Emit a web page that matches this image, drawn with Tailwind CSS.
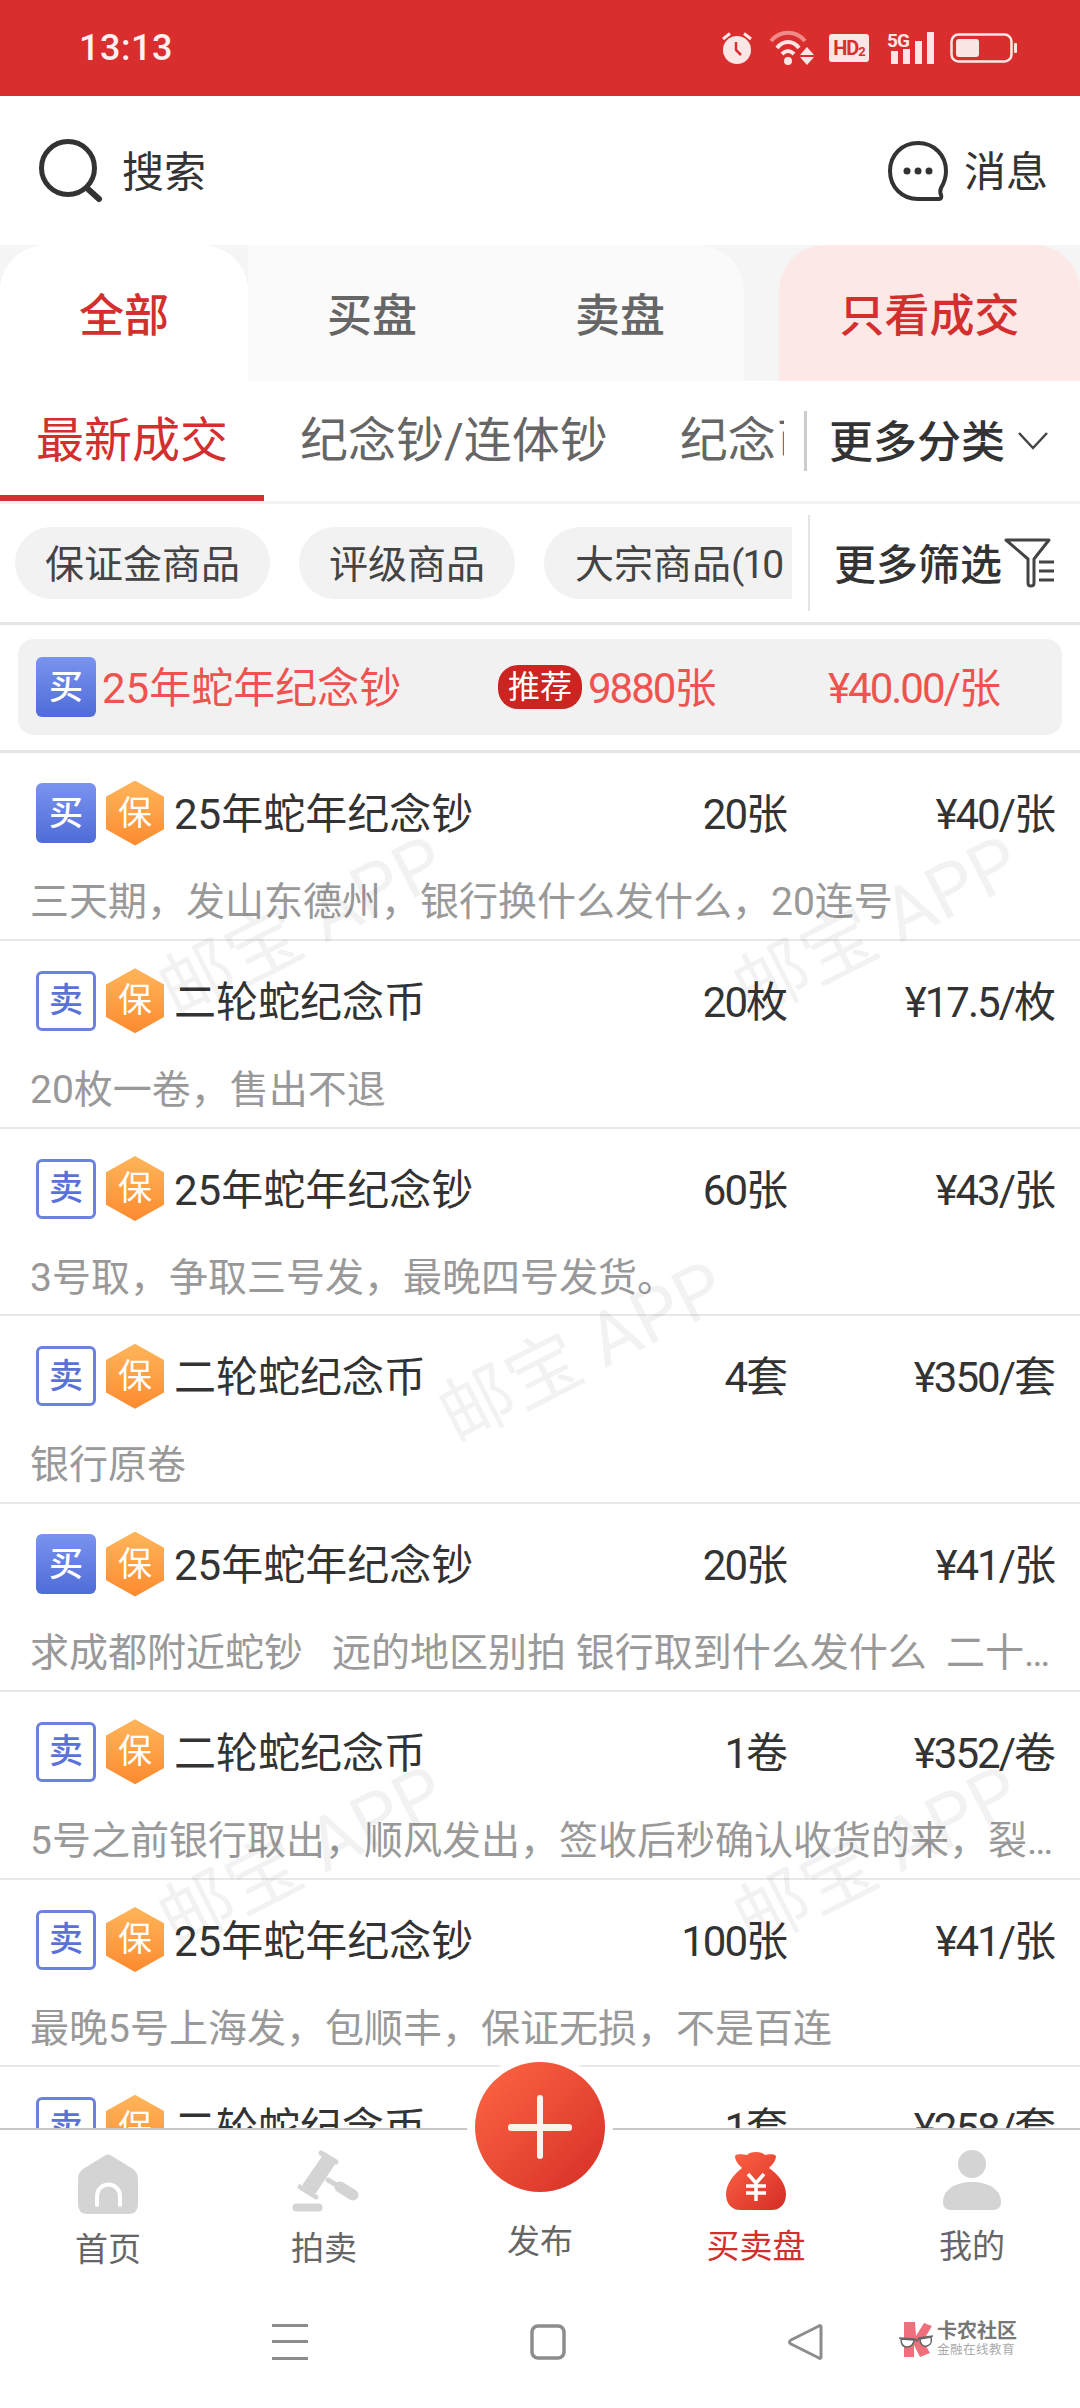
<!DOCTYPE html>
<html lang="zh-CN">
  <head>
    <meta charset="UTF-8" />
    <meta name="viewport" content="width=device-width, initial-scale=1.0" />
    <title>买卖盘</title>
    <script src="https://cdn.jsdelivr.net/npm/@tailwindcss/browser@4"></script>
  </head>

  <body class="bg-white font-[family-name:Roboto,'Noto_Sans_CJK_SC',sans-serif] text-[#333]">
    <div class="relative flex flex-col w-[1080px] h-[2408px] overflow-hidden bg-white">
      <!-- Status bar -->
      <div class="flex items-center h-[96px] shrink-0 bg-[#d92e2d] pl-[79px] pr-[62px] text-[#fbe6e6]">
        <span class="text-[36px] font-medium tracking-[0.5px] text-[#fdf0f0]">13:13</span>
        <div class="flex items-center ml-auto">
          <svg width="32" height="34" viewBox="0 0 32 34" fill="#fbe6e6">
            <circle cx="16" cy="19" r="14" />
            <path d="M2 8 9 2.5M30 8 23 2.5" stroke="#fbe6e6" stroke-width="3" />
            <path d="M15 11v8l5 5" fill="none" stroke="#d92e2d" stroke-width="2.5" />
          </svg>
          <svg class="ml-[16px]" width="46" height="36" viewBox="0 0 46 36" fill="none">
            <path d="M2 11C11 0 27 0 36 11" stroke="#f08a86" stroke-width="4" />
            <path d="M8 18C14 10 24 10 30 18" stroke="#fbe6e6" stroke-width="4" />
            <path d="M13 24C17 20 21 20 25 24" stroke="#fbe6e6" stroke-width="4" />
            <circle cx="19" cy="31" r="4" fill="#fbe6e6" />
            <path d="M38 18l7 8H31zM31 28h14l-7 8z" fill="#fbe6e6" transform="translate(0 -1)" />
          </svg>
          <span class="flex items-center justify-center ml-[14px] w-[40px] h-[28px] rounded-[3px] bg-[#fbe6e6] text-[#d92e2d] text-[20px] font-bold leading-none tracking-[-1px]">HD<span class="text-[13px] mt-[6px]">2</span></span>
          <div class="relative ml-[18px] w-[48px] h-[32px]">
            <svg class="absolute left-0 top-0" width="48" height="32" viewBox="0 0 48 32" fill="#fbe6e6">
              <rect x="4" y="19" width="7" height="13" />
              <rect x="16" y="17" width="7" height="15" />
              <rect x="28" y="9" width="7" height="23" />
              <rect x="40" y="0" width="7" height="32" />
            </svg>
            <span class="absolute left-0 top-[-1px] text-[19px] font-bold leading-none tracking-[-1px]">5G</span>
          </div>
          <svg class="ml-[15px]" width="68" height="30" viewBox="0 0 68 30" fill="none">
            <rect x="1.5" y="1.5" width="60" height="27" rx="7" stroke="#fbe6e6" stroke-width="2.5" />
            <rect x="6" y="6" width="23" height="18" rx="3" fill="#fbe6e6" />
            <rect x="64" y="10" width="3" height="10" rx="1" fill="#fbe6e6" />
          </svg>
        </div>
      </div>

      <!-- Search + messages -->
      <div class="flex items-center justify-between h-[149px] shrink-0 pl-[38px] pr-[32px]">
        <div class="flex items-center">
          <svg width="66" height="64" viewBox="0 0 66 64" fill="none">
            <circle cx="30" cy="29" r="26.5" stroke="#333" stroke-width="5" />
            <path d="M50 50 61 60" stroke="#333" stroke-width="6" stroke-linecap="round" />
          </svg>
          <span class="ml-[18px] pt-[4px] text-[42px] leading-none">搜索</span>
        </div>
        <div class="flex items-center">
          <svg class="-ml-[3px]" width="62" height="62" viewBox="0 0 62 62" fill="none">
            <path d="M31 3C15 3 3 15 3 31s12 28 28 28c4 0 11 0 21 0 2 0 3-2 2-4-1-2-1-4 0-7 3-5 5-10 5-17C59 15 47 3 31 3Z" stroke="#333" stroke-width="4" />
            <circle cx="20" cy="31" r="3.5" fill="#333" />
            <circle cx="31" cy="31" r="3.5" fill="#333" />
            <circle cx="42" cy="31" r="3.5" fill="#333" />
          </svg>
          <span class="ml-[15px] pt-[4px] text-[42px] leading-none">消息</span>
        </div>
      </div>

      <!-- Trade type tabs -->
      <div class="flex h-[136px] shrink-0 bg-[#f5f5f5] text-[45px] font-medium">
        <div class="flex items-center justify-center w-[248px] pt-[8px] rounded-t-[46px] bg-white text-[#d32f2f]">全部</div>
        <div class="flex w-[496px] rounded-tr-[46px] bg-[#fafafa] text-[#666]">
          <div class="flex items-center justify-center w-[248px] pt-[8px]">买盘</div>
          <div class="flex items-center justify-center w-[248px] pt-[8px]">卖盘</div>
        </div>
        <div class="flex items-center justify-center ml-[35px] flex-1 pt-[8px] rounded-t-[46px] bg-[#fde8e8] text-[#d32f2f]">只看成交</div>
      </div>

      <!-- Categories -->
      <div class="flex items-center h-[123px] shrink-0 border-b-[3px] border-[#f2f2f2]">
        <div class="flex h-full w-[784px] overflow-hidden whitespace-nowrap text-[48px] text-[#666]">
          <div class="flex items-center shrink-0 px-[36px] border-y-[6px] border-t-transparent border-b-[#d32f2f] text-[#d32f2f]">最新成交</div>
          <div class="flex items-center shrink-0 px-[36px]">纪念钞/连体钞</div>
          <div class="flex items-center shrink-0 px-[36px]">纪念币</div>
        </div>
        <div class="ml-[20px] w-[3px] h-[60px] bg-[#ccc]"></div>
        <span class="ml-[22px] pt-[4px] text-[44px] font-medium whitespace-nowrap">更多分类</span>
        <svg class="ml-[12px]" width="32" height="20" viewBox="0 0 32 20" fill="none">
          <path d="M2 2 16 17 30 2" stroke="#444" stroke-width="2.5" />
        </svg>
      </div>

      <!-- Filters -->
      <div class="flex items-center h-[121px] shrink-0 border-b-[3px] border-[#e5e5e5]">
        <div class="flex gap-[29px] w-[792px] shrink-0 pl-[15px] overflow-hidden whitespace-nowrap text-[39px] text-[#444]">
          <span class="flex items-center h-[72px] px-[30px] pt-[4px] rounded-full bg-[#f2f2f2]">保证金商品</span>
          <span class="flex items-center h-[72px] px-[30px] pt-[4px] rounded-full bg-[#f2f2f2]">评级商品</span>
          <span class="flex items-center h-[72px] pl-[31px] pr-[30px] pt-[4px] rounded-full bg-[#f2f2f2] whitespace-pre">大宗商品<span class="tracking-[-2px]">(10</span>  0+)</span>
        </div>
        <div class="ml-[16px] w-[2px] h-[96px] bg-[#e5e5e5]"></div>
        <span class="ml-[24px] pt-[4px] text-[42px] font-medium whitespace-nowrap">更多筛选</span>
        <svg class="ml-[2px]" width="52" height="52" viewBox="0 0 52 52" fill="none">
          <path d="M2 3H45L30 22V46c0 4-6 4-6 0V22Z" stroke="#444" stroke-width="3" stroke-linejoin="round" />
          <path d="M35 25H50M35 34H50M35 43H50" stroke="#444" stroke-width="3" />
        </svg>
      </div>

      <!-- Pinned order -->
      <div class="h-[128px] shrink-0 pt-[14px] border-b-[3px] border-[#e5e5e5]">
        <div class="flex items-center h-[96px] mx-[18px] pl-[18px] rounded-[16px] bg-[#f1f1f1] text-[42px] text-[#ef5350] whitespace-nowrap">
          <span class="flex items-center justify-center w-[60px] h-[60px] rounded-[6px] bg-linear-to-b from-[#7b93ef] to-[#4f6cd8] text-[34px] font-medium text-white">买</span>
          <span class="ml-[6px] w-[396px] pt-[3px]">25年蛇年纪念钞</span>
          <span class="flex items-center justify-center w-[84px] h-[44px] rounded-[20px] bg-[#cc2420] text-[32px] text-white">推荐</span>
          <span class="ml-[6px] w-[240px] pt-[3px] tracking-[-2px]">9880张</span>
          <span class="pt-[3px] tracking-[-2px]">¥40.00/张</span>
        </div>
      </div>

      <!-- Order list -->
      <div class="relative flex-1 overflow-hidden">
        <div class="h-[187.75px] border-b-[2px] border-[#e8e8e8] pt-[30px] pl-[30px] pr-[26px]">
          <div class="flex items-center h-[60px] pl-[6px] text-[42px] whitespace-nowrap">
            <span class="flex items-center justify-center shrink-0 w-[60px] h-[60px] rounded-[6px] bg-linear-to-b from-[#7b93ef] to-[#4f6cd8] text-[34px] font-medium text-white">买</span>
            <span class="flex items-center justify-center shrink-0 ml-[10px] w-[58px] h-[65px] bg-linear-to-b from-[#ffb55a] to-[#fc8a2e] [clip-path:polygon(50%_0,100%_25%,100%_75%,50%_100%,0_75%,0_25%)] text-[34px] text-white">保</span>
            <span class="ml-[10px] flex-1 pt-[3px]">25年蛇年纪念钞</span>
            <span class="pt-[3px] text-right tracking-[-2px]">20张</span>
            <span class="w-[268px] pt-[3px] text-right tracking-[-2px]">¥40/张</span>
          </div>
          <p class="mt-[29px] truncate text-[39px] leading-[60px] text-[#999]">三天期，发山东德州，银行换什么发什么，20连号</p>
        </div>
        <div class="h-[187.75px] border-b-[2px] border-[#e8e8e8] pt-[30px] pl-[30px] pr-[26px]">
          <div class="flex items-center h-[60px] pl-[6px] text-[42px] whitespace-nowrap">
            <span class="flex items-center justify-center shrink-0 w-[60px] h-[60px] rounded-[6px] border-[3px] border-[#6b82df] text-[34px] font-medium text-[#5a72d8]">卖</span>
            <span class="flex items-center justify-center shrink-0 ml-[10px] w-[58px] h-[65px] bg-linear-to-b from-[#ffb55a] to-[#fc8a2e] [clip-path:polygon(50%_0,100%_25%,100%_75%,50%_100%,0_75%,0_25%)] text-[34px] text-white">保</span>
            <span class="ml-[10px] flex-1 pt-[3px]">二轮蛇纪念币</span>
            <span class="pt-[3px] text-right tracking-[-2px]">20枚</span>
            <span class="w-[268px] pt-[3px] text-right tracking-[-2px]">¥17.5/枚</span>
          </div>
          <p class="mt-[29px] truncate text-[39px] leading-[60px] text-[#999]">20枚一卷，售出不退</p>
        </div>
        <div class="h-[187.75px] border-b-[2px] border-[#e8e8e8] pt-[30px] pl-[30px] pr-[26px]">
          <div class="flex items-center h-[60px] pl-[6px] text-[42px] whitespace-nowrap">
            <span class="flex items-center justify-center shrink-0 w-[60px] h-[60px] rounded-[6px] border-[3px] border-[#6b82df] text-[34px] font-medium text-[#5a72d8]">卖</span>
            <span class="flex items-center justify-center shrink-0 ml-[10px] w-[58px] h-[65px] bg-linear-to-b from-[#ffb55a] to-[#fc8a2e] [clip-path:polygon(50%_0,100%_25%,100%_75%,50%_100%,0_75%,0_25%)] text-[34px] text-white">保</span>
            <span class="ml-[10px] flex-1 pt-[3px]">25年蛇年纪念钞</span>
            <span class="pt-[3px] text-right tracking-[-2px]">60张</span>
            <span class="w-[268px] pt-[3px] text-right tracking-[-2px]">¥43/张</span>
          </div>
          <p class="mt-[29px] truncate text-[39px] leading-[60px] text-[#999]">3号取，争取三号发，最晚四号发货。</p>
        </div>
        <div class="h-[187.75px] border-b-[2px] border-[#e8e8e8] pt-[30px] pl-[30px] pr-[26px]">
          <div class="flex items-center h-[60px] pl-[6px] text-[42px] whitespace-nowrap">
            <span class="flex items-center justify-center shrink-0 w-[60px] h-[60px] rounded-[6px] border-[3px] border-[#6b82df] text-[34px] font-medium text-[#5a72d8]">卖</span>
            <span class="flex items-center justify-center shrink-0 ml-[10px] w-[58px] h-[65px] bg-linear-to-b from-[#ffb55a] to-[#fc8a2e] [clip-path:polygon(50%_0,100%_25%,100%_75%,50%_100%,0_75%,0_25%)] text-[34px] text-white">保</span>
            <span class="ml-[10px] flex-1 pt-[3px]">二轮蛇纪念币</span>
            <span class="pt-[3px] text-right tracking-[-2px]">4套</span>
            <span class="w-[268px] pt-[3px] text-right tracking-[-2px]">¥350/套</span>
          </div>
          <p class="mt-[29px] truncate text-[39px] leading-[60px] text-[#999]">银行原卷</p>
        </div>
        <div class="h-[187.75px] border-b-[2px] border-[#e8e8e8] pt-[30px] pl-[30px] pr-[26px]">
          <div class="flex items-center h-[60px] pl-[6px] text-[42px] whitespace-nowrap">
            <span class="flex items-center justify-center shrink-0 w-[60px] h-[60px] rounded-[6px] bg-linear-to-b from-[#7b93ef] to-[#4f6cd8] text-[34px] font-medium text-white">买</span>
            <span class="flex items-center justify-center shrink-0 ml-[10px] w-[58px] h-[65px] bg-linear-to-b from-[#ffb55a] to-[#fc8a2e] [clip-path:polygon(50%_0,100%_25%,100%_75%,50%_100%,0_75%,0_25%)] text-[34px] text-white">保</span>
            <span class="ml-[10px] flex-1 pt-[3px]">25年蛇年纪念钞</span>
            <span class="pt-[3px] text-right tracking-[-2px]">20张</span>
            <span class="w-[268px] pt-[3px] text-right tracking-[-2px]">¥41/张</span>
          </div>
          <p class="mt-[29px] truncate whitespace-pre text-[39px] leading-[60px] text-[#999]">求成都附近蛇钞   远的地区别拍 银行取到什么发什么  二十连号</p>
        </div>
        <div class="h-[187.75px] border-b-[2px] border-[#e8e8e8] pt-[30px] pl-[30px] pr-[26px]">
          <div class="flex items-center h-[60px] pl-[6px] text-[42px] whitespace-nowrap">
            <span class="flex items-center justify-center shrink-0 w-[60px] h-[60px] rounded-[6px] border-[3px] border-[#6b82df] text-[34px] font-medium text-[#5a72d8]">卖</span>
            <span class="flex items-center justify-center shrink-0 ml-[10px] w-[58px] h-[65px] bg-linear-to-b from-[#ffb55a] to-[#fc8a2e] [clip-path:polygon(50%_0,100%_25%,100%_75%,50%_100%,0_75%,0_25%)] text-[34px] text-white">保</span>
            <span class="ml-[10px] flex-1 pt-[3px]">二轮蛇纪念币</span>
            <span class="pt-[3px] text-right tracking-[-2px]">1卷</span>
            <span class="w-[268px] pt-[3px] text-right tracking-[-2px]">¥352/卷</span>
          </div>
          <p class="mt-[29px] truncate text-[39px] leading-[60px] text-[#999]">5号之前银行取出，顺风发出，签收后秒确认收货的来，裂开不退</p>
        </div>
        <div class="h-[187.75px] border-b-[2px] border-[#e8e8e8] pt-[30px] pl-[30px] pr-[26px]">
          <div class="flex items-center h-[60px] pl-[6px] text-[42px] whitespace-nowrap">
            <span class="flex items-center justify-center shrink-0 w-[60px] h-[60px] rounded-[6px] border-[3px] border-[#6b82df] text-[34px] font-medium text-[#5a72d8]">卖</span>
            <span class="flex items-center justify-center shrink-0 ml-[10px] w-[58px] h-[65px] bg-linear-to-b from-[#ffb55a] to-[#fc8a2e] [clip-path:polygon(50%_0,100%_25%,100%_75%,50%_100%,0_75%,0_25%)] text-[34px] text-white">保</span>
            <span class="ml-[10px] flex-1 pt-[3px]">25年蛇年纪念钞</span>
            <span class="pt-[3px] text-right tracking-[-2px]">100张</span>
            <span class="w-[268px] pt-[3px] text-right tracking-[-2px]">¥41/张</span>
          </div>
          <p class="mt-[29px] truncate text-[39px] leading-[60px] text-[#999]">最晚5号上海发，包顺丰，保证无损，不是百连</p>
        </div>
        <div class="h-[187.75px] pt-[30px] pl-[30px] pr-[26px]">
          <div class="flex items-center h-[60px] pl-[6px] text-[42px] whitespace-nowrap">
            <span class="flex items-center justify-center shrink-0 w-[60px] h-[60px] rounded-[6px] border-[3px] border-[#6b82df] text-[34px] font-medium text-[#5a72d8]">卖</span>
            <span class="flex items-center justify-center shrink-0 ml-[10px] w-[58px] h-[65px] bg-linear-to-b from-[#ffb55a] to-[#fc8a2e] [clip-path:polygon(50%_0,100%_25%,100%_75%,50%_100%,0_75%,0_25%)] text-[34px] text-white">保</span>
            <span class="ml-[10px] flex-1 pt-[3px]">二轮蛇纪念币</span>
            <span class="pt-[3px] text-right tracking-[-2px]">1套</span>
            <span class="w-[268px] pt-[3px] text-right tracking-[-2px]">¥258/套</span>
          </div>
        </div>

        <!-- Watermarks -->
        <span class="absolute left-[148px] top-[118px] -rotate-[27deg] whitespace-nowrap text-[74px] text-black/5 pointer-events-none">邮宝 APP</span>
        <span class="absolute left-[723px] top-[118px] -rotate-[27deg] whitespace-nowrap text-[74px] text-black/5 pointer-events-none">邮宝 APP</span>
        <span class="absolute left-[428px] top-[543px] -rotate-[27deg] whitespace-nowrap text-[74px] text-black/5 pointer-events-none">邮宝 APP</span>
        <span class="absolute left-[148px] top-[1048px] -rotate-[27deg] whitespace-nowrap text-[74px] text-black/5 pointer-events-none">邮宝 APP</span>
        <span class="absolute left-[723px] top-[1048px] -rotate-[27deg] whitespace-nowrap text-[74px] text-black/5 pointer-events-none">邮宝 APP</span>
      </div>

      <!-- Bottom navigation -->
      <div class="relative shrink-0 bg-white border-t-[2px] border-[#c8c8c8]">
        <div class="grid grid-cols-5 h-[170px] text-[33px] text-[#666] leading-[40px]">
          <div class="flex flex-col items-center pt-[24px]">
            <svg width="60" height="60" viewBox="0 0 60 60">
              <path d="M26 2Q30 -1 34 2L55 15Q60 19 60 25V50Q60 60 50 60H10Q0 60 0 50V25Q0 19 5 15Z" fill="#d4d4d4" />
              <path d="M19 51V42a11.5 11.5 0 0 1 23 0V51" fill="none" stroke="#fff" stroke-width="4" stroke-linecap="round" />
            </svg>
            <span class="mt-[16px]">首页</span>
          </div>
          <div class="flex flex-col items-center pt-[20px]">
            <svg width="72" height="62" viewBox="0 0 72 62" fill="#d4d4d4" stroke="#d4d4d4" stroke-linecap="round">
              <path d="M36 6 46 13 27 42 16 35Z" stroke-width="3" stroke-linejoin="round" />
              <path d="M33 3 48 12M12 37 28 47" stroke-width="5" />
              <path d="M40 30 52 37" stroke-width="5" />
              <path d="M52 37 65 45" stroke-width="11" />
              <rect x="5" y="54" width="29" height="7" rx="3" stroke-width="1" />
            </svg>
            <span class="mt-[17px]">拍卖</span>
          </div>
          <div class="flex flex-col items-center pt-[92px]">
            <span>发布</span>
          </div>
          <div class="flex flex-col items-center pt-[20px]">
            <svg width="60" height="60" viewBox="0 0 60 60">
              <defs>
                <linearGradient id="bag" x1="0" y1="0" x2="1" y2="1">
                  <stop offset="0" stop-color="#ff6644" />
                  <stop offset="1" stop-color="#d42c26" />
                </linearGradient>
              </defs>
              <path d="M9 6C12 3 18 5 21 5 24 1 36 1 39 5 42 5 46 3 50 6 50 11 46 15 43 18 52 24 60 34 60 44 60 54 54 60 46 60H14C6 60 0 54 0 44 0 34 8 24 16 18 13 15 9 11 9 6Z" fill="url(#bag)" />
              <path d="M22 24 30 33 38 24M20 36H40M20 43H40M30 33V51" fill="none" stroke="#fff" stroke-width="3.5" />
            </svg>
            <span class="mt-[17px] text-[#d32f2f]">买卖盘</span>
          </div>
          <div class="flex flex-col items-center pt-[20px]">
            <svg width="58" height="60" viewBox="0 0 58 60" fill="#d4d4d4">
              <ellipse cx="29" cy="14" rx="14" ry="14" />
              <path d="M0 52C0 40 12 32 29 32s29 8 29 20c0 5-3 8-8 8H8c-5 0-8-3-8-8Z" />
            </svg>
            <span class="mt-[17px]">我的</span>
          </div>
        </div>

        <!-- System navigation -->
        <div class="flex items-start h-[108px] pl-[272px] pt-[24px]">
          <svg width="36" height="36" viewBox="0 0 36 36" fill="#8c8c8c">
            <rect y="0" width="36" height="3" />
            <rect y="16" width="36" height="3" />
            <rect y="33" width="36" height="3" />
          </svg>
          <svg class="ml-[222px]" width="36" height="36" viewBox="0 0 36 36" fill="none">
            <rect x="2" y="2" width="32" height="32" rx="6" stroke="#8c8c8c" stroke-width="3.5" />
          </svg>
          <svg class="ml-[222px]" width="36" height="36" viewBox="0 0 36 36" fill="none">
            <path d="M33 3v30c0 1-1 2-2 1L3 20c-2-1-2-3 0-4L31 2c1-1 2 0 2 1Z" stroke="#8c8c8c" stroke-width="3" stroke-linejoin="round" />
          </svg>
          <div class="flex ml-[75px] -mt-[3px]">
            <svg width="36" height="36" viewBox="0 0 36 36">
              <path d="M5 1H16L17 15 25 2 33 5 24 20 31 32 21 36 15 24 15 36H5Z" fill="#ef6f7d" />
              <path d="M0 17 16 18 18 20 20 17 34 15" fill="none" stroke="#666" stroke-width="1.5" />
              <path d="M2 18c0 5 2 8 6 8s7-3 7-7ZM21 18c0 5 3 8 7 7s5-5 4-9Z" fill="#fff" stroke="#666" stroke-width="1.5" />
            </svg>
            <div class="ml-[2px] flex flex-col whitespace-nowrap">
              <span class="text-[20px] leading-[21px] font-bold text-[#777]">卡农社区</span>
              <span class="text-[12.5px] leading-[15px] text-[#aaa] tracking-[0.5px]">金融在线教育</span>
            </div>
          </div>
        </div>

        <!-- Publish button, sits over the tab bar edge -->
        <div class="absolute left-[467px] top-[-76px] flex items-center justify-center w-[146px] h-[146px] rounded-full bg-white">
          <div class="flex items-center justify-center w-[130px] h-[130px] rounded-full bg-linear-to-br from-[#ff6644] to-[#d42c26]">
            <svg width="64" height="64" viewBox="0 0 64 64" fill="#fdf3ee">
              <rect x="0" y="29" width="64" height="7" rx="3" />
              <rect x="29" y="0" width="6" height="64" rx="3" />
            </svg>
          </div>
        </div>
      </div>
    </div>
  </body>
</html>
